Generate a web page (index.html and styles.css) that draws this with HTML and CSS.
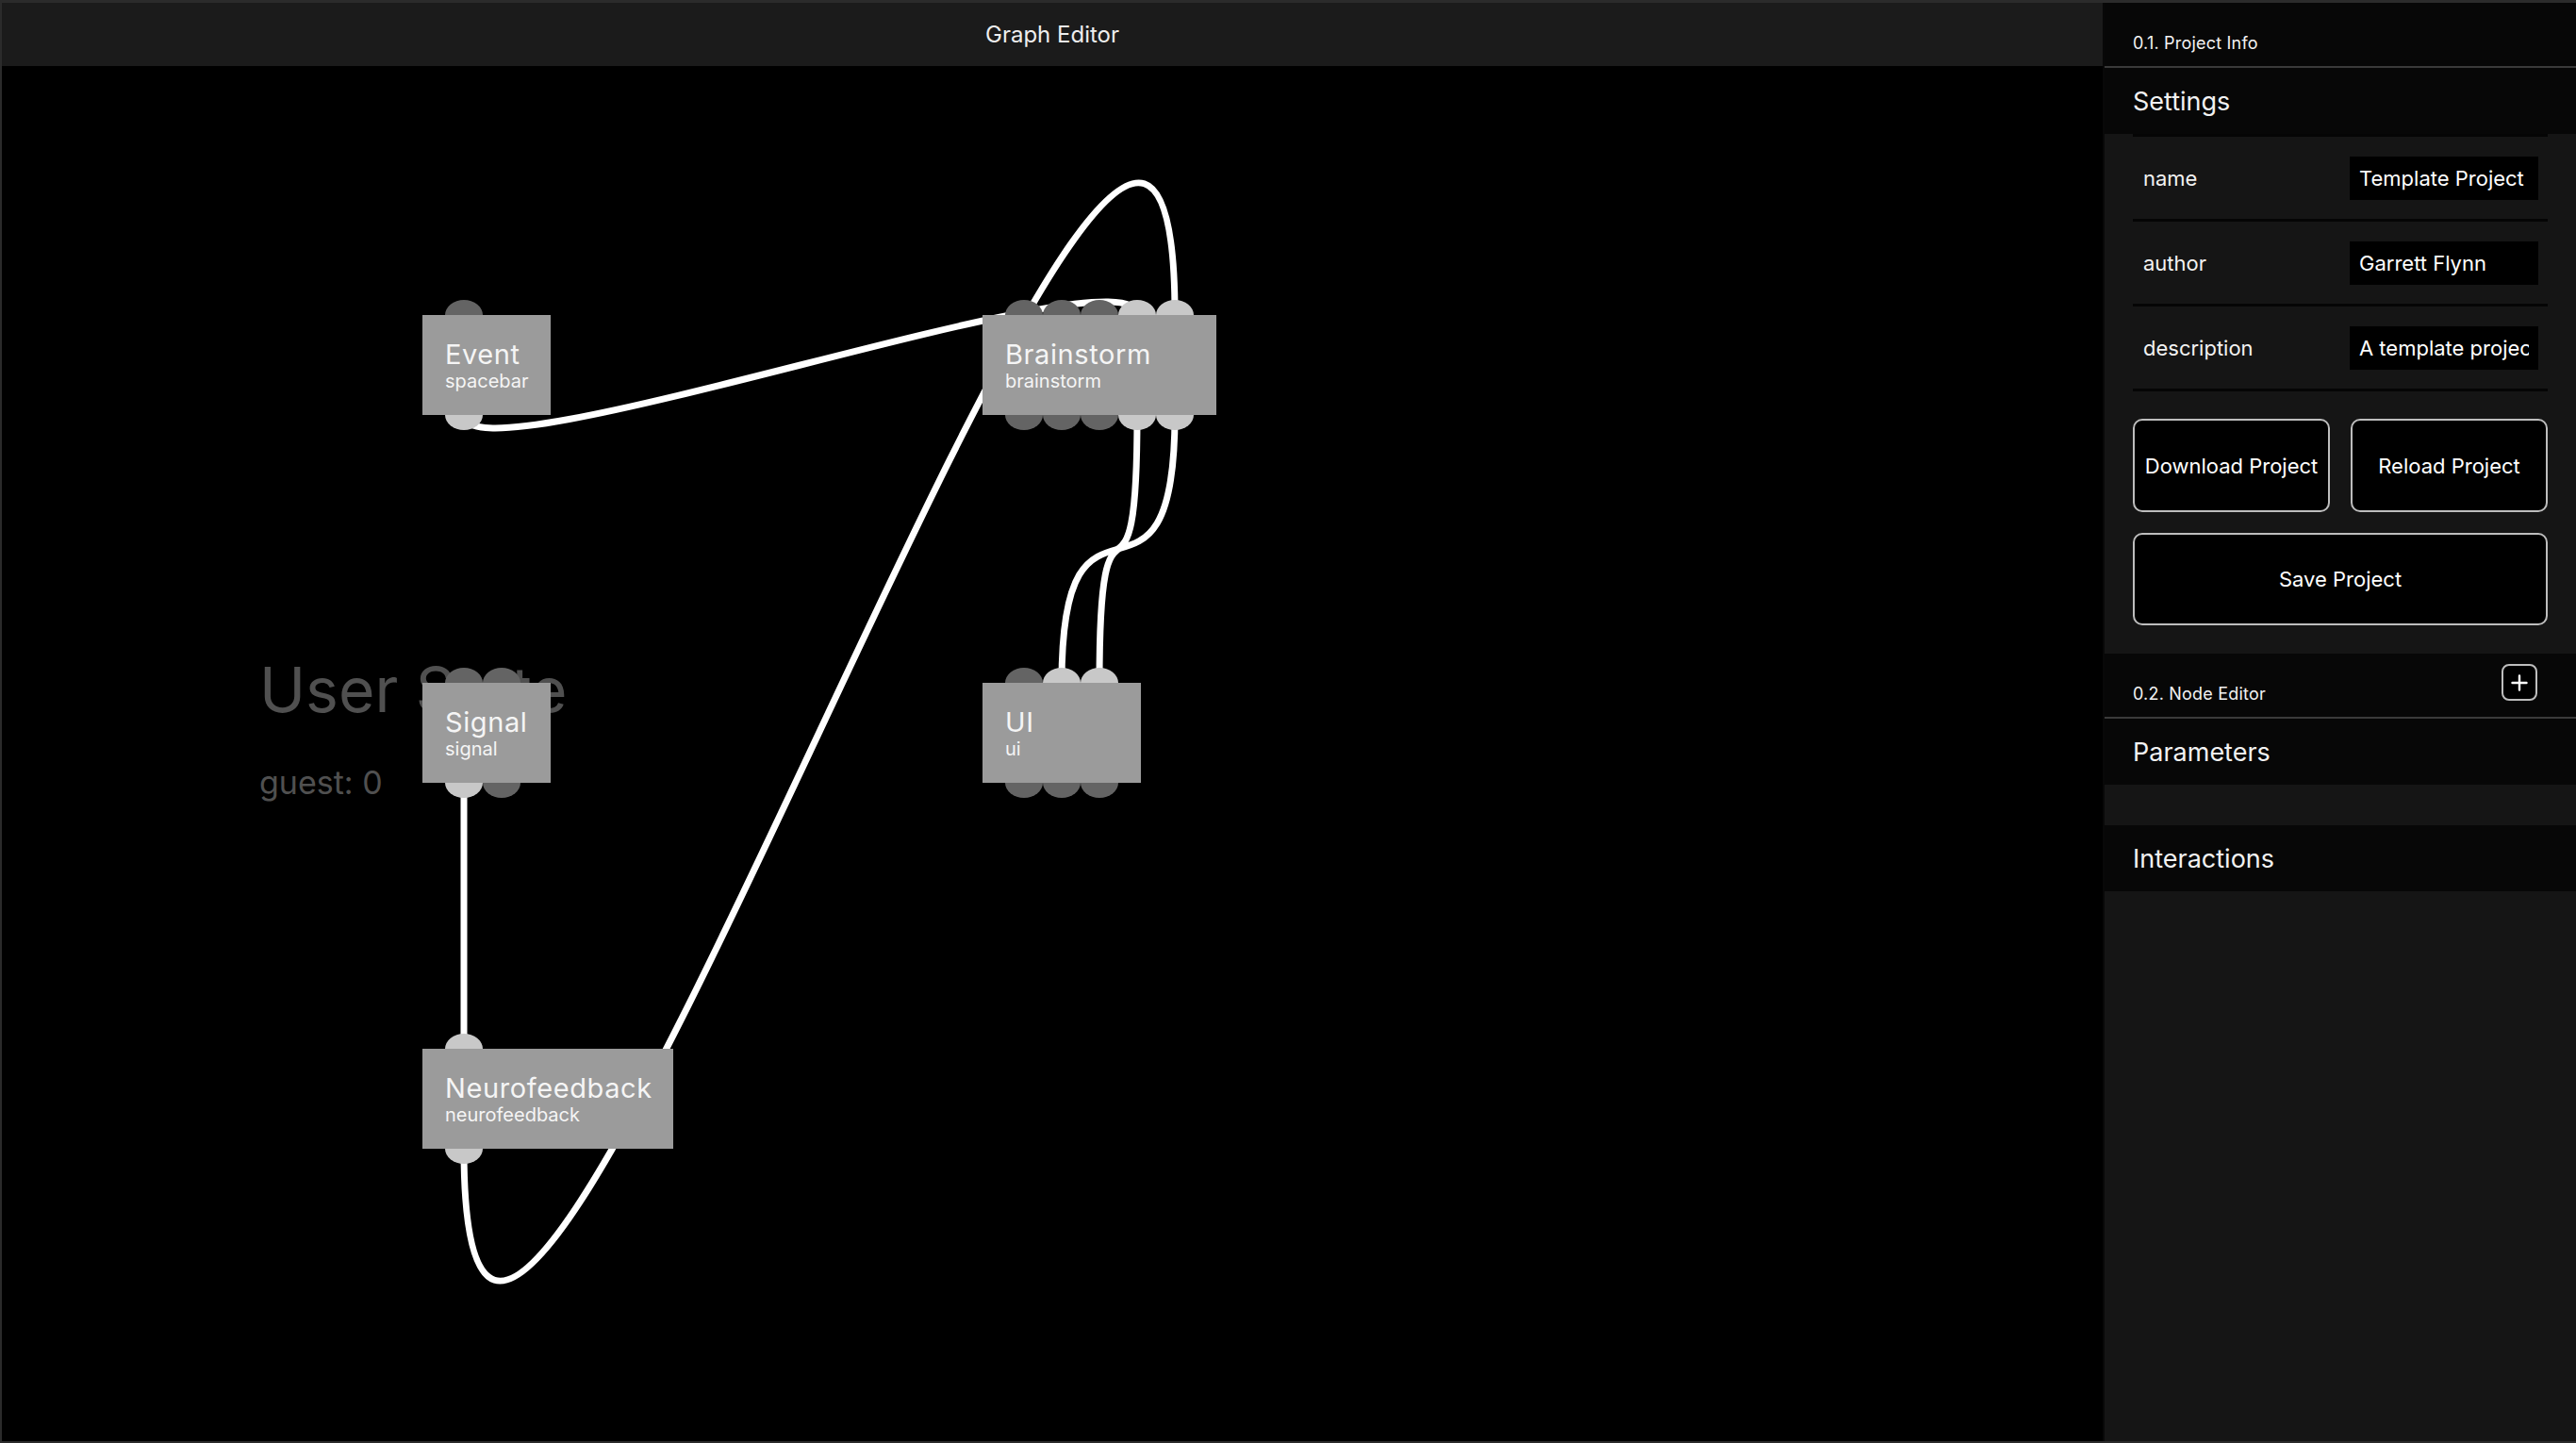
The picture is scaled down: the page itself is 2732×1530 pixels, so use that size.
FILE: index.html
```html
<!DOCTYPE html>
<html lang="en">
<head>
    <meta charset="UTF-8">
    <meta name="viewport" content="width=device-width, initial-scale=1.0">
    <title>Graph Editor</title>
    <link rel="stylesheet" href="styles.css">
</head>
<body>
    <div class="editor">
        <div class="editor-head">Graph Editor</div>

        <div class="canvas">
            <div class="user-state">
                <div class="user-state-title">User State</div>
                <div class="user-state-line">guest: 0</div>
            </div>

            <!-- edges sit under the nodes -->
            <svg class="edges" width="2228" height="1458" viewBox="0 0 2228 1458">
                <path d="M490 370 C490 445 1204 189 1204 264" />
                <path d="M490 1148 C490 1868 1244 -456 1244 264" />
                <path d="M490 760 L490 1042" />
                <path d="M1204 370 C1204 620 1164 404 1164 654" />
                <path d="M1244 370 C1244 620 1124 404 1124 654" />
            </svg>

            <div class="node" style="left:446px;top:264px;width:136px">
                <div class="ports ports-top"><span class="port"></span></div>
                <div class="node-box">
                    <div class="node-title">Event</div>
                    <div class="node-sub">spacebar</div>
                </div>
                <div class="ports ports-bottom"><span class="port on"></span></div>
            </div>

            <div class="node" style="left:1040px;top:264px;width:248px">
                <div class="ports ports-top">
                    <span class="port"></span><span class="port"></span><span class="port"></span><span class="port on"></span><span class="port on"></span>
                </div>
                <div class="node-box">
                    <div class="node-title">Brainstorm</div>
                    <div class="node-sub">brainstorm</div>
                </div>
                <div class="ports ports-bottom">
                    <span class="port"></span><span class="port"></span><span class="port"></span><span class="port on"></span><span class="port on"></span>
                </div>
            </div>

            <div class="node" style="left:446px;top:654px;width:136px">
                <div class="ports ports-top"><span class="port"></span><span class="port"></span></div>
                <div class="node-box">
                    <div class="node-title">Signal</div>
                    <div class="node-sub">signal</div>
                </div>
                <div class="ports ports-bottom"><span class="port on"></span><span class="port"></span></div>
            </div>

            <div class="node" style="left:1040px;top:654px;width:168px">
                <div class="ports ports-top"><span class="port"></span><span class="port on"></span><span class="port on"></span></div>
                <div class="node-box">
                    <div class="node-title">UI</div>
                    <div class="node-sub">ui</div>
                </div>
                <div class="ports ports-bottom"><span class="port"></span><span class="port"></span><span class="port"></span></div>
            </div>

            <div class="node" style="left:446px;top:1042px;width:266px">
                <div class="ports ports-top"><span class="port on"></span></div>
                <div class="node-box">
                    <div class="node-title">Neurofeedback</div>
                    <div class="node-sub">neurofeedback</div>
                </div>
                <div class="ports ports-bottom"><span class="port on"></span></div>
            </div>
        </div>
    </div>

    <div class="sidebar">
        <div class="section-head">
            <span>0.1. Project Info</span>
        </div>

        <div class="group-head">Settings</div>
        <div class="group-body">
            <div class="settings">
                <div class="setting-row">
                    <label for="name">name</label>
                    <input id="name" type="text" value="Template Project">
                </div>
                <div class="setting-row">
                    <label for="author">author</label>
                    <input id="author" type="text" value="Garrett Flynn">
                </div>
                <div class="setting-row">
                    <label for="description">description</label>
                    <input id="description" type="text" value="A template project for brains@play">
                </div>
            </div>
            <div class="actions">
                <button>Download Project</button>
                <button>Reload Project</button>
                <button class="wide">Save Project</button>
            </div>
        </div>

        <div class="section-head">
            <span>0.2. Node Editor</span>
            <button class="add-btn" title="Add node">
                <svg width="18" height="18" viewBox="0 0 18 18"><path d="M9 1.5 V16.5 M1.5 9 H16.5" stroke="#fff" stroke-width="2.4" stroke-linecap="round" fill="none"/></svg>
            </button>
        </div>

        <div class="group-head">Parameters</div>
        <div class="group-body empty"></div>

        <div class="group-head">Interactions</div>
    </div>
</body>
</html>
```

FILE: styles.css
```css
* {
    box-sizing: border-box;
}
html, body {
    height: 100%;
}
body {
    margin: 0;
    padding: 3px 0 2px 2px;
    background-color: #2b2b2b;
    font-family: Inter, "Open Sans", sans-serif;
    color: #f2f2f2;
    display: grid;
    grid-template-columns: 2228px 502px;
    overflow: hidden;
}

/* graph editor */
.editor {
    display: flex;
    flex-direction: column;
    min-height: 0;
}
.editor-head {
    height: 67px;
    flex-shrink: 0;
    background-color: #1b1b1b;
    display: flex;
    align-items: center;
    justify-content: center;
    font-size: 24px;
    color: #eee;
}
.canvas {
    flex: 1;
    position: relative;
    background-color: #000;
    overflow: hidden;
}
.user-state {
    position: absolute;
    left: 273px;
    top: 628px;
    z-index: 0;
    color: #505050;
}
.user-state-title {
    font-size: 66px;
    line-height: 66px;
}
.user-state-line {
    margin-top: 49px;
    font-size: 34px;
    line-height: 34px;
}
.edges {
    position: absolute;
    left: 0;
    top: 0;
    z-index: 1;
    overflow: visible;
}
.edges path {
    fill: none;
    stroke: #fff;
    stroke-width: 7;
}
.node {
    position: absolute;
    z-index: 2;
}
.node-box {
    position: relative;
    z-index: 1;
    height: 106px;
    padding: 26px 24px 24px;
    background-color: #9b9b9b;
    color: #f5f5f5;
    white-space: nowrap;
}
.node-title {
    font-size: 29px;
    line-height: 32px;
    letter-spacing: 0.6px;
}
.node-sub {
    font-size: 20px;
    line-height: 24px;
}
.ports {
    position: absolute;
    left: 24px;
    z-index: 0;
    display: flex;
}
.ports-top {
    top: -16px;
}
.ports-bottom {
    bottom: -16px;
}
.port {
    width: 40px;
    height: 32px;
    border-radius: 50%;
    background-color: #646464;
}
.port.on {
    background-color: #c8c8c8;
}

/* sidebar */
.sidebar {
    background-color: #151515;
    border-left: 2px solid #080808;
    min-height: 0;
}
.section-head {
    height: 69px;
    padding: 0 30px 13px;
    background-color: #070707;
    border-bottom: 2px solid #3a3a3a;
    display: flex;
    align-items: flex-end;
    justify-content: space-between;
    font-size: 18px;
    line-height: 22px;
    letter-spacing: 0.2px;
}
.add-btn {
    align-self: flex-start;
    margin-top: 11px;
    margin-right: 11px;
    width: 38px;
    height: 39px;
    padding: 0;
    background-color: #000;
    border: 2px solid #bdbdbd;
    border-radius: 8px;
    display: flex;
    align-items: center;
    justify-content: center;
    cursor: pointer;
}
.group-head {
    height: 70px;
    padding: 0 30px;
    background-color: #070707;
    display: flex;
    align-items: center;
    font-size: 27px;
}
.group-body {
    background-color: #151515;
    padding: 0 30px 30px;
}
.group-body.empty {
    height: 43px;
    padding: 0;
}
.settings {
    border-top: 3px solid #050505;
}
.setting-row {
    height: 90px;
    border-bottom: 3px solid #050505;
    display: flex;
    align-items: center;
    justify-content: space-between;
    padding: 0 10px 0 11px;
    font-size: 22px;
}
.setting-row input {
    width: 200px;
    height: 46px;
    padding: 0 10px;
    border: none;
    background-color: #000;
    color: #fff;
    font-family: inherit;
    font-size: 22px;
    outline: none;
}
.actions {
    margin-top: 29px;
    display: grid;
    grid-template-columns: 1fr 1fr;
    gap: 22px;
}
.actions button {
    height: 99px;
    background-color: #000;
    color: #fff;
    border: 2px solid #bdbdbd;
    border-radius: 10px;
    font-family: inherit;
    font-size: 22px;
    cursor: pointer;
}
.actions button.wide {
    grid-column: span 2;
    height: 98px;
}
```
